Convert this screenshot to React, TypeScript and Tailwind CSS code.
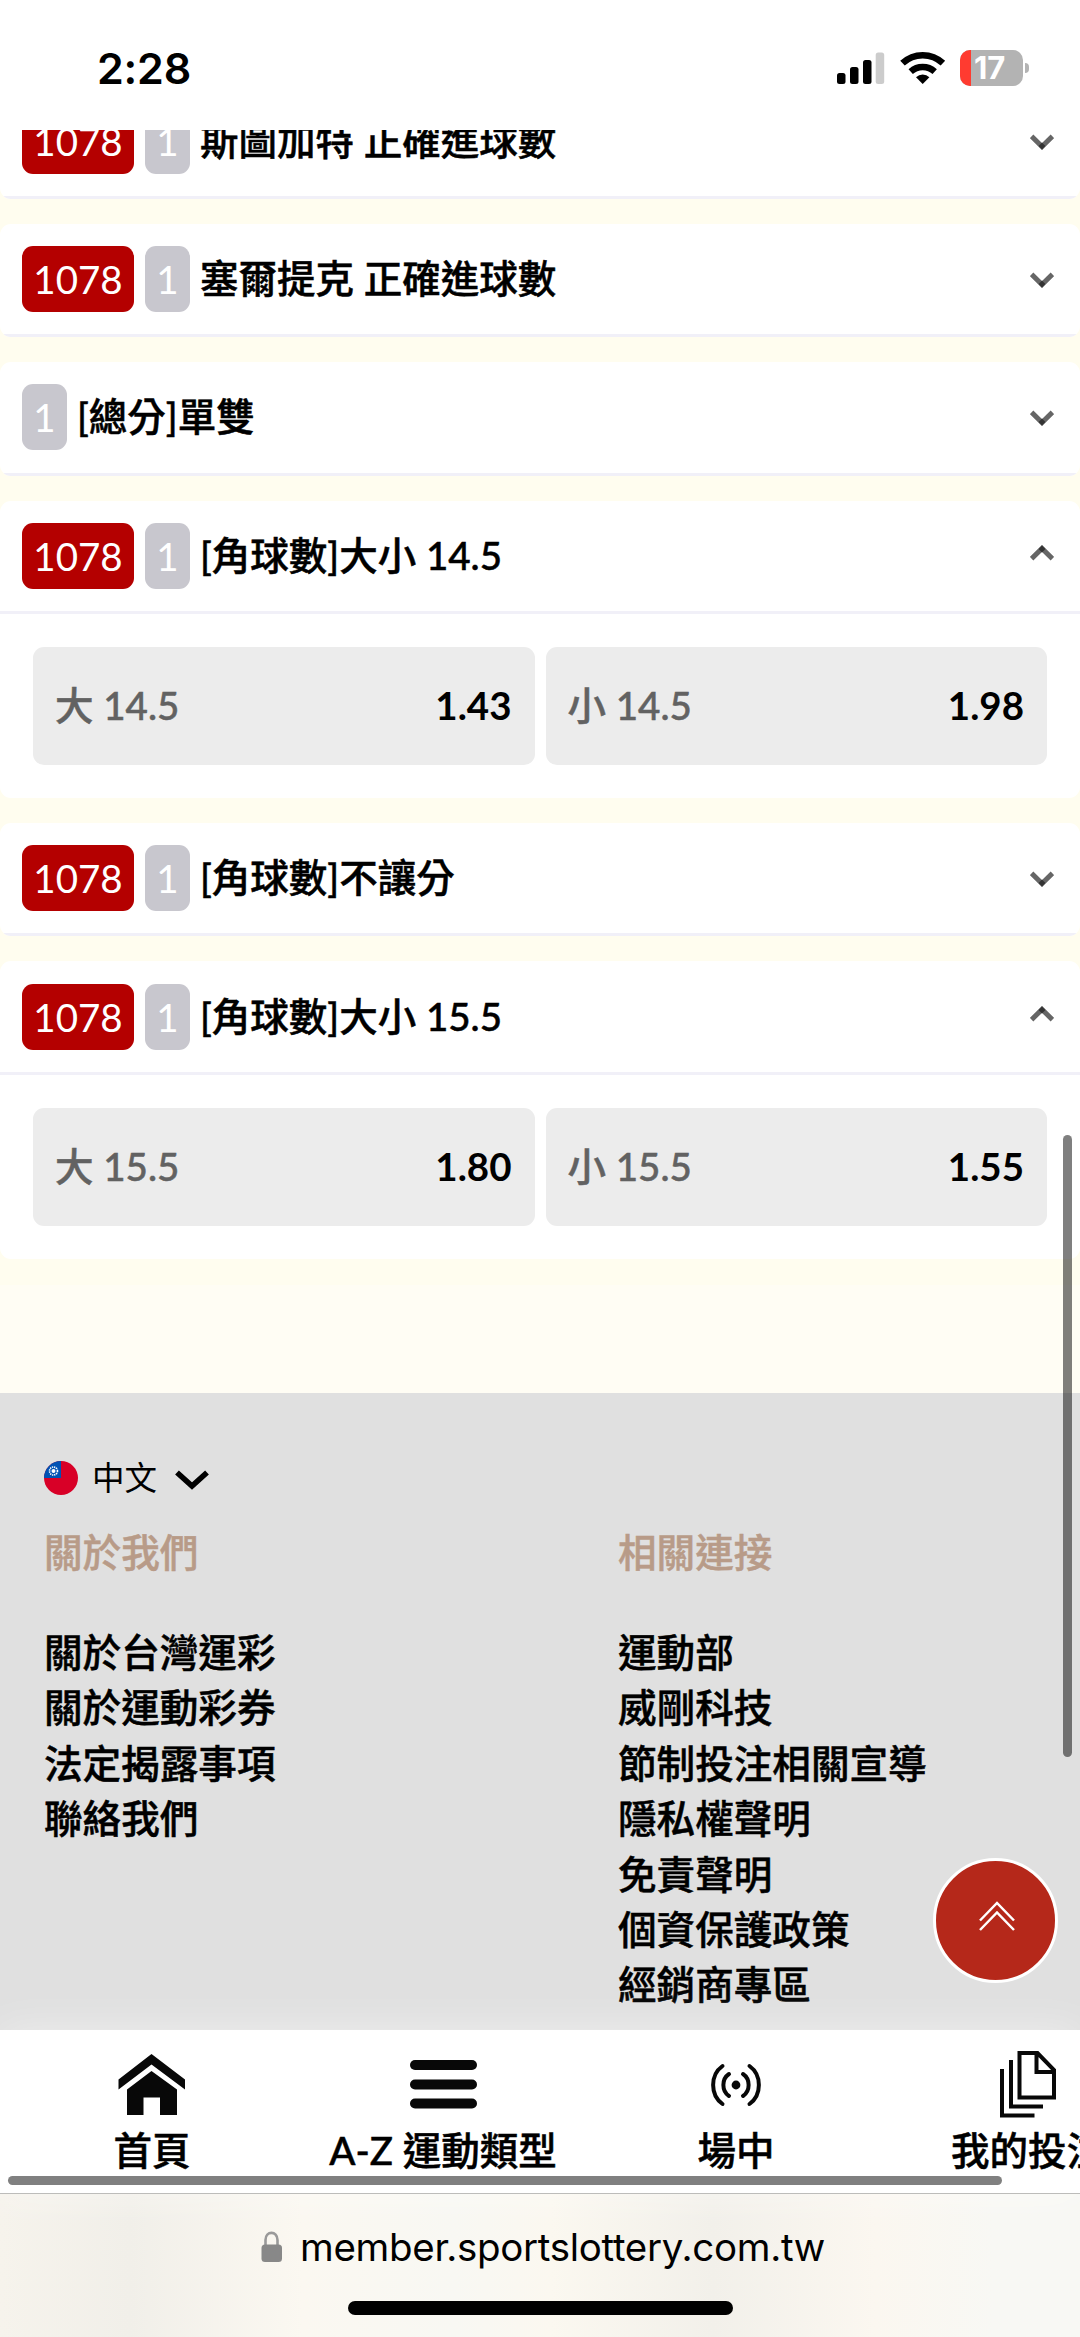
import React from 'react';

type Option = { label: string; odds: string };
type Market = { id: number; code?: string; title: string; options?: Option[] };

const markets: Market[] = [
    { id: 1, code: '1078', title: '斯圖加特 正確進球數' },
    { id: 2, code: '1078', title: '塞爾提克 正確進球數' },
    { id: 3, title: '[總分]單雙' },
    { id: 4, code: '1078', title: '[角球數]大小 14.5', options: [{ label: '大 14.5', odds: '1.43' }, { label: '小 14.5', odds: '1.98' }] },
    { id: 5, code: '1078', title: '[角球數]不讓分' },
    { id: 6, code: '1078', title: '[角球數]大小 15.5', options: [{ label: '大 15.5', odds: '1.80' }, { label: '小 15.5', odds: '1.55' }] },
];

const aboutLinks = ['關於台灣運彩', '關於運動彩券', '法定揭露事項', '聯絡我們'];
const relatedLinks = ['運動部', '威剛科技', '節制投注相關宣導', '隱私權聲明', '免責聲明', '個資保護政策', '經銷商專區'];

const StatusBar = () => (
    <header className="relative z-10 flex h-[130px] shrink-0 items-start justify-between bg-white pr-[51px] pl-[97px]">
        <div className="mt-[42px] font-['Inter',sans-serif] text-[43px] leading-[52px] font-semibold tracking-[-0.2px]">2:28</div>
        <div className="mt-[50px] flex items-start">
            <svg width="48" height="36" viewBox="0 0 48 36">
                <rect x="0" y="23" width="8.5" height="11" rx="2.5" />
                <rect x="13" y="17" width="8.5" height="17" rx="2.5" />
                <rect x="26" y="10" width="8.5" height="24" rx="2.5" />
                <rect x="38.7" y="2.5" width="8.5" height="31.5" rx="2.5" fill="#cccccc" />
            </svg>
            <svg className="ml-[15px]" width="46" height="36" viewBox="0 0 46 36">
                <path d="M2.5 13.2 A29.5 29.5 0 0 1 42.9 13.2" fill="none" stroke="#000" strokeWidth="6.6" />
                <path d="M10.7 21.6 A17.8 17.8 0 0 1 34.7 21.6" fill="none" stroke="#000" strokeWidth="6.4" />
                <path d="M22.7 34 L16 27.2 A10 10 0 0 1 29.4 27.2 Z" />
            </svg>
            <div className="relative ml-[14px] h-[36px] w-[63px] overflow-hidden rounded-[10px] bg-[#b3b3b3]">
                <div className="h-full w-[11px] bg-[#ff3b30]" />
                <span className="absolute top-0 left-[14px] font-['Inter',sans-serif] text-[31px] leading-[36px] font-bold text-white">17</span>
            </div>
            <div className="mt-[13px] ml-[2px] h-[10px] w-[4px] rounded-r-full bg-[#b3b3b3]" />
        </div>
    </header>
);

const Chevron = ({ up }: { up?: boolean }) => (
    <svg className={up ? '-mt-[5px] rotate-180' : 'mt-[2px]'} width="24" height="16" viewBox="0 0 24 16">
        <path d="M1.6 2.4 L12 12.6 L22.4 2.4" fill="none" stroke="#666" strokeWidth="5" />
        <path d="M12 8.6 L15.4 12 L12 15.6 L8.6 12 Z" fill="#333" />
    </svg>
);

const MarketCard = ({ market }: { market: Market }) => (
    <section className="overflow-hidden rounded-[11px] bg-white">
        <div className="flex h-[113.4px] items-center gap-[11px] border-b-[3px] border-[#f1f0f8] pr-[26px] pl-[22px]">
            {market.code && (
                <span className="flex h-[66px] w-[112px] items-center justify-center rounded-[11px] bg-[#b40000] text-white">{market.code}</span>
            )}
            <span className="flex h-[66px] w-[45px] items-center justify-center rounded-[11px] bg-[#c8c7ce] text-white">1</span>
            <h2 className="-mt-[2px] -ml-px flex-1 font-medium [-webkit-text-stroke:0.5px_currentColor]">{market.title}</h2>
            <Chevron up={!!market.options} />
        </div>
        {market.options && (
            <div className="flex gap-[11px] px-[33px] py-[33px]">
                {market.options.map((option) => (
                    <button key={option.label} className="flex h-[118px] flex-1 items-center justify-between rounded-[11px] bg-[#ececec] px-[23px] pb-[1px]">
                        <span className="-ml-px font-medium text-[#626262] [-webkit-text-stroke:0.5px_currentColor]">{option.label}</span>
                        <span className="font-bold">{option.odds}</span>
                    </button>
                ))}
            </div>
        )}
    </section>
);

const Flag = () => (
    <svg width="34" height="34" viewBox="0 0 34 34">
        <circle cx="17" cy="17" r="17" fill="#d80027" />
        <path d="M17 0 A17 17 0 0 0 0 17 H17 Z" fill="#0052b4" />
        <circle cx="9.5" cy="10" r="4" fill="none" stroke="#fff" strokeWidth="1.6" strokeDasharray="1.3 0.8" />
        <circle cx="9.5" cy="10" r="2" fill="#fff" />
    </svg>
);

const LinkColumn = ({ title, links }: { title: string; links: string[] }) => (
    <div className="text-[38.6px] leading-[55.4px] font-medium [-webkit-text-stroke:0.5px_currentColor]">
        <h3 className="text-[#b89b88]">{title}</h3>
        <ul className="mt-[44.6px]">
            {links.map((link) => (
                <li key={link}>{link}</li>
            ))}
        </ul>
    </div>
);

const Footer = () => (
    <footer className="min-h-0 flex-1 overflow-hidden bg-[#e0e0e0] px-[44px] pt-[61px]">
        <div className="flex h-[48px] items-center">
            <Flag />
            <span className="ml-[14px] text-[32.5px]">中文</span>
            <svg className="mt-[4px] ml-[18px]" width="34" height="20" viewBox="0 0 34 20">
                <path d="M2 2.5 L17 16 L32 2.5" fill="none" stroke="#000" strokeWidth="5.6" />
            </svg>
        </div>
        <div className="mt-[23px] grid grid-cols-[574px_1fr]">
            <LinkColumn title="關於我們" links={aboutLinks} />
            <LinkColumn title="相關連接" links={relatedLinks} />
        </div>
    </footer>
);

const NavItem = ({ label, className, children }: { label: string; className: string; children: React.ReactNode }) => (
    <a className={`flex shrink-0 flex-col items-center ${className}`}>
        <span className="flex h-[69px] items-center">{children}</span>
        <span className="mt-[8px] leading-[46px] font-medium whitespace-nowrap [-webkit-text-stroke:0.5px_currentColor]">{label}</span>
    </a>
);

const BottomNav = () => (
    <nav className="relative flex h-[164px] shrink-0 overflow-x-clip border-b border-[#bcbcba] bg-white pt-[20px] shadow-[0_0_40px_rgba(255,255,255,0.45)]">
        <NavItem label="首頁" className="ml-[92px] w-[120px]">
            <svg width="68" height="64" viewBox="0 0 68 64" fill="#080808">
                <path d="M33.5 1 L67 26.5 V36.5 L33.5 11.5 L0.5 36.5 V26.5 Z" />
                <path d="M33.5 18 L59 36.5 V62 H42 V44.5 H25.5 V62 H9 V36.5 Z" />
            </svg>
        </NavItem>
        <NavItem label="A-Z 運動類型" className="ml-[101px] w-[260px]">
            <svg width="67" height="50" viewBox="0 0 67 50" fill="#080808">
                <rect width="67" height="10" rx="5" />
                <rect y="19.5" width="67" height="10" rx="5" />
                <rect y="38.5" width="67" height="10" rx="5" />
            </svg>
        </NavItem>
        <NavItem label="場中" className="ml-[103px] w-[120px]">
            <svg width="52" height="44" viewBox="0 0 52 44" fill="none" stroke="#080808" strokeWidth="4" strokeLinecap="round">
                <circle cx="26" cy="22" r="4.4" fill="#080808" stroke="none" />
                <path d="M19 11 C11.5 16 11.5 28 19 33 M33 11 C40.5 16 40.5 28 33 33" />
                <path d="M12.5 3 C0 12 0 32 12.5 41 M39.5 3 C52 12 52 32 39.5 41" />
            </svg>
        </NavItem>
        <NavItem label="我的投注" className="ml-[152px] w-[160px]">
            <svg width="58" height="69" viewBox="0 0 58 69" fill="none" stroke="#080808" strokeWidth="4">
                <path d="M20.5 3 H38.5 L55 20 V47.5 H20.5 Z M37.5 3 V22 H55" />
                <path d="M12 10 V56.5 H44" />
                <path d="M3 19 V65.5 H35.5" />
            </svg>
        </NavItem>
        <div className="absolute bottom-[8px] left-[8px] h-[9px] w-[994px] rounded-full bg-[#808080]" />
    </nav>
);

const BrowserBar = () => (
    <div className="flex h-[143px] shrink-0 flex-col items-center bg-[linear-gradient(90deg,#f6f3ec_0%,#f1efe9_12%,#fbf8f1_28%,#f8f8f3_42%,#fbf8f0_51%,#f2f0ea_66%,#fbf7f0_81%,#f8f8f4_92%)]">
        <div className="mt-[28px] ml-[6px] flex h-[50px] items-center">
            <svg width="22" height="32" viewBox="0 0 22 32">
                <path d="M4.5 14 V9 C4.5 -0.5 16.5 -0.5 16.5 9 V14" fill="none" stroke="#999" strokeWidth="2.6" />
                <rect x="0.5" y="13.5" width="20.5" height="17.5" rx="3.5" fill="#888" />
            </svg>
            <span className="ml-[17px] font-['Inter',sans-serif] text-[38.5px] tracking-[-0.3px]">member.sportslottery.com.tw</span>
        </div>
        <div className="mt-[29px] h-[14px] w-[385px] rounded-full bg-black" />
    </div>
);

const App = () => {
    return (
        <div className="relative flex h-[2337px] w-[1080px] flex-col overflow-hidden bg-[#fffdef] font-['Lato','Noto_Sans_CJK_TC',sans-serif] text-[38.5px] leading-[48px] text-black">
            <StatusBar />
            <main className="-mt-[44.6px] flex h-[1200px] shrink-0 flex-col gap-[25px]">
                {markets.map((market) => (
                    <MarketCard key={market.id} market={market} />
                ))}
            </main>
            <div className="h-[107.6px] shrink-0 bg-[#fffdf4]" />
            <Footer />
            <BottomNav />
            <BrowserBar />
            <button className="absolute top-[1858px] left-[933px] flex size-[125px] items-center justify-center rounded-full border-[3px] border-white bg-[#b5281a]">
                <svg className="mt-[-9px] ml-[3px]" width="36" height="30" viewBox="0 0 36 30" fill="none" stroke="#fff" strokeWidth="2.5">
                    <path d="M1 19.5 L18 2 L35 19.5 M1 29 L18 11.5 L35 29" />
                </svg>
            </button>
            <div className="absolute top-[1135px] right-[8px] h-[622px] w-[9px] rounded-full bg-black/50" />
        </div>
    );
};

export default App;
